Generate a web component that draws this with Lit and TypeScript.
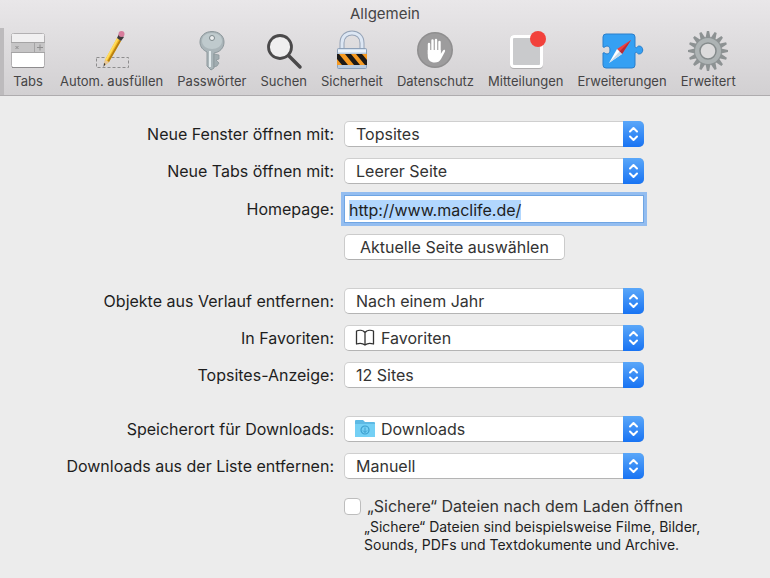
import { LitElement, html, css, svg, nothing, type TemplateResult } from "lit";
import { customElement, property } from "lit/decorators.js";

const toothAngles = Array.from({ length: 16 }, (_, i) => i * 22.5);

const icons: Record<string, TemplateResult> = {
  tabs: svg`
    <rect x="1.500" y="3.500" width="33" height="34" rx="2" fill="#fff" stroke="#b2b0b2"/>
    <rect x="2" y="4" width="32" height="9" fill="#f1f0f1"/>
    <rect x="1" y="12" width="34" height="11" fill="#c6c5c6"/>
    <path d="M1 12.500h34M1 22.500h34M24.500 12v11" stroke="#a5a4a5"/>
    <path d="M5.500 16l3 3M8.500 16l-3 3" stroke="#8f8e8f"/>
    <path d="M27 17.500h6M30 14.500v6" stroke="#8f8e8f"/>
    <path d="M2 37.500h32" stroke="#8e8c8e"/>`,
  pencil: svg`
    <rect x="2.500" y="27.500" width="32" height="10" fill="none" stroke="#8d8c8d" stroke-dasharray="3 2"/>
    <path d="M11 30L23 8l4 3L15 32l-5 4z" fill="#f5bd27"/>
    <path d="M11 30L23 8l1.500 1-12 22z" fill="#ffdd62"/>
    <path d="M15 32L27 11l-1.500-1-12 21z" fill="#b67e12"/>
    <path d="M11 30l4 2-5 4z" fill="#e8c79b"/>
    <path d="M10 33l1.500 1-2 3z" fill="#333"/>
    <path d="M23 8l2-4 5 3-3 4z" fill="#3d383c"/>
    <circle cx="27.500" cy="4" r="3" fill="#d77d9d"/>`,
  key: svg`
    <path d="M18 1.500C11 1.500 6 6 6 12c0 5 3 8 7 10v14l4 4 3-2V23c6-1 10-5 10-11C30 6 25 1.500 18 1.500z" fill="#aab5b9" stroke="#8d989c"/>
    <path d="M18 3C12 3 8 6 8 11s5 8 10 8 10-3 10-8-4-8-10-8z" fill="#bfcacd"/>
    <path d="M20 24l5 1v4l-3 1 3 3-2 3-3 1z" fill="#a1acb0" stroke="#8d989c" stroke-width=".8"/>
    <path d="M16 21v16" stroke="#e2eaec" stroke-width="2"/>
    <circle cx="18" cy="8" r="2.500" fill="#eceeef" stroke="#7d888c"/>`,
  search: svg`
    <circle cx="14" cy="17" r="11.500" fill="#efeeef" stroke="#4a494a" stroke-width="2.800"/>
    <path d="M23 26l11 11" stroke="#4a494a" stroke-width="3.500" stroke-linecap="round"/>`,
  lock: svg`
    <path d="M8 20V13c0-13.500 20-13.500 20 0v7" fill="none" stroke="#94a2b6" stroke-width="5"/>
    <path d="M8 20V13c0-13.500 20-13.500 20 0v7" fill="none" stroke="#dde7f4" stroke-width="3"/>
    <rect x="3.500" y="18.500" width="29" height="20" rx="1" fill="#b9cbe0" stroke="#8da0b8"/>
    <rect x="3" y="24" width="30" height="11" fill="#f59a23"/>
    <path d="M3 24h2l9 11H8l-5-6zM11 24h6l9 11h-6zM22 24h6l5 6v5h-2z" fill="#1d1a18"/>
    <path d="M4 21h28" stroke="#edf4fc" stroke-width="3"/>`,
  hand: svg`
    <circle cx="18" cy="20" r="18" fill="#8f8e8f"/>
    <circle cx="18" cy="20" r="16.500" fill="#9d9c9d"/>
    <path d="M12 14v10M15.500 10.500v12M19 10v12M22.500 12v11" stroke="#fff" stroke-width="2.400" stroke-linecap="round"/>
    <path d="M10.800 20h12.900v4l2.300-3.500c1-1.300 2.600-.5 2 1l-4 7.500c-1.300 2.500-3.400 3.500-6.200 3.500-4.500 0-7-2.500-7-6.500z" fill="#fff"/>`,
  badge: svg`
    <rect x="2" y="5" width="33" height="34" rx="4" fill="#b0afb0"/>
    <rect x="2" y="5" width="33" height="33" rx="4" fill="#fff"/>
    <rect x="5" y="8" width="27" height="27" rx="1" fill="#c9cacc"/>
    <circle cx="30" cy="9" r="8" fill="#f2413b"/>`,
  puzzle: svg`
    <path d="M4 4h26q3 0 3 3v10c2 2 2-1 4-1 5 0 5 8 0 8-2 0-2-3-4-1v12q0 3-3 3H4q-3 0-3-3V23c2-1 2 1 4 1 4 0 4-8 0-8-2 0-2 2-4 1V7q0-3 3-3z" fill="#35a0f3" stroke="#2a7ecb"/>
    <path d="M29 10L15 19l5 5z" fill="#f0403f"/>
    <path d="M7 33l8-14 5 5z" fill="#fff"/>
    <path d="M29 10L17.500 21.500 20 24z" fill="#b82b37"/>
    <path d="M7 33l10.500-11.500L20 24z" fill="#c6d8e7"/>`,
  gear: svg`
    ${toothAngles.map((a) => svg`<path d="M18.900 1h2.200l1.400 7h-5z" fill="#8d9293" transform="rotate(${a} 20 21)"/>`)}
    <circle cx="20" cy="21" r="14" fill="#8d9394"/>
    <circle cx="20" cy="21" r="10.500" fill="none" stroke="#adb3b4" stroke-width="5"/>
    <circle cx="20" cy="21" r="8" fill="#dcdbdc" stroke="#858b8c" stroke-width="1.500"/>`,
  book: svg`
    <path d="M10 3.500C8 1 4 1 1.500 2v13c3-1 6-1 8.500 1 2.500-2 5.500-2 8.500-1V2C16 1 12 1 10 3.500zV16" fill="none" stroke="#333" stroke-width="1.300" stroke-linejoin="round"/>`,
  folder: svg`
    <path d="M1 0h7l2 2h9q1 0 1 1v14H0V1q0-1 1-1z" fill="#5db9e4"/>
    <path d="M0 4h20v13H0z" fill="#74d0f5"/>
    <circle cx="10" cy="10" r="4" fill="none" stroke="#3c9fce" stroke-width="1.200"/>
    <path d="M10 7.500v5M8 10.500l2 2 2-2" fill="none" stroke="#3c9fce"/>`,
};

@customElement("pref-select")
class PrefSelect extends LitElement {
  @property() name = "";
  @property() label = "";
  @property() icon = "";
  @property({ type: Array }) options: string[] = [];

  static styles = css`
    :host { display: contents; }
    .label { text-align: right; }
    .box { position: relative; width: 100%; max-width: 300px; }
    .field {
      display: block; box-sizing: border-box; width: 100%; height: 26px;
      appearance: none; margin: 0; padding: 0 32px 0 11px;
      border: 1px solid #cfcfcf; border-bottom-color: #b4b4b4; border-radius: 5px;
      background: #fff; color: #333; font: inherit;
    }
    .with-icon { padding-left: 36px; }
    .glyph { position: absolute; left: 11px; top: 4px; width: 20px; height: 18px; }
    .knob {
      position: absolute; right: 0; top: 0; width: 21px; height: 26px;
      border-radius: 0 5px 5px 0; background: linear-gradient(#5aa7f9, #1873f3);
      pointer-events: none;
    }
  `;

  render() {
    return html`
      <label class="label" for=${this.name}>${this.label}</label>
      <div class="box">
        <select id=${this.name} class="field ${this.icon ? "with-icon" : ""}">
          ${this.options.map((o) => html`<option>${o}</option>`)}
        </select>
        ${this.icon
          ? html`<svg class="glyph" viewBox="0 0 20 18" aria-hidden="true">${icons[this.icon]}</svg>`
          : nothing}
        <svg class="knob" viewBox="0 0 21 26" aria-hidden="true">
          <path d="M7 10.500l3.500-3.500 3.500 3.500M7 15.500l3.500 3.500 3.500-3.500" fill="none" stroke="#fff"
            stroke-width="2" stroke-linecap="round" stroke-linejoin="round"/>
        </svg>
      </div>`;
  }
}

const tools: [string, string][] = [
  ["tabs", "Tabs"],
  ["pencil", "Autom. ausfüllen"],
  ["key", "Passwörter"],
  ["search", "Suchen"],
  ["lock", "Sicherheit"],
  ["hand", "Datenschutz"],
  ["badge", "Mitteilungen"],
  ["puzzle", "Erweiterungen"],
  ["gear", "Erweitert"],
];

@customElement("app-root")
class AppRoot extends LitElement {
  static styles = css`
    :host {
      display: block; min-height: 100vh; background: #ececec; color: #1e1e1e;
      font: 16px/20px Inter, "Liberation Sans", sans-serif;
    }
    .head {
      background: linear-gradient(#e9e7e9, #d2d0d2);
      border-bottom: 1px solid #aeacae;
    }
    .title {
      margin: 0; padding: 4px 0; text-align: center; color: #454445;
      font-size: 15px; font-weight: 400;
    }
    .tools { display: flex; align-items: stretch; gap: 14px; height: 67px; }
    .current { width: 4px; margin-right: -8px; background: #bdbbbd; }
    .tool {
      display: flex; flex-direction: column; align-items: center; gap: 1px; min-width: 36px;
      margin: 0; padding: 2px 0 0; border: 0; background: none; color: #454445;
      font: 13px/20px Inter, "Liberation Sans", sans-serif; white-space: nowrap;
    }
    .icon { display: block; width: 36px; height: 40px; overflow: visible; }
    .wide { width: 40px; }
    .form { display: flex; flex-direction: column; gap: 28px; padding: 25px 0 24px; }
    .group {
      display: grid; grid-template-columns: minmax(0, 334fr) minmax(0, 426fr);
      column-gap: 10px; row-gap: 11px; align-items: center;
    }
    .label { text-align: right; }
    .url {
      box-sizing: border-box; width: 100%; max-width: 300px; height: 28px; margin: 0;
      padding: 2px 4px 0; border: 1px solid #6fa5e3; border-radius: 0; outline: 0;
      box-shadow: 0 0 0 3px #93bdf0; background: #fff; color: #1e1e1e; font: inherit;
    }
    .url::selection { background: #b2d7fe; color: #1e1e1e; }
    .push {
      grid-column: 2; justify-self: start; height: 26px; margin: 0; padding: 0 15px;
      border: 1px solid #cbcbcb; border-bottom-color: #b0b0b0; border-radius: 5px;
      background: #fff; color: #333; font: inherit;
    }
    .safe { grid-column: 2; padding-top: 6px; }
    .check { display: flex; align-items: center; gap: 6px; color: #333; }
    .tick {
      appearance: none; box-sizing: border-box; width: 17px; height: 17px; margin: 0; flex: none;
      border: 1px solid #bdbdbd; border-radius: 4px; background: #fff;
    }
    .hint { margin: 2px 0 0 20px; max-width: 350px; font-size: 14px; line-height: 18px; }
  `;

  firstUpdated() {
    const url = this.renderRoot.querySelector<HTMLInputElement>("#homepage");
    url?.focus();
    url?.select();
  }

  render() {
    return html`
      <header class="head">
        <h1 class="title">Allgemein</h1>
        <nav class="tools">
          <span class="current"></span>
          ${tools.map(([icon, text]) => {
            const wide = icon === "gear" || icon === "puzzle";
            return html`
              <button class="tool" type="button">
                <svg class="icon ${wide ? "wide" : ""}" viewBox="0 0 ${wide ? 40 : 36} 40"
                  aria-hidden="true">${icons[icon]}</svg>
                ${text}
              </button>`;
          })}
        </nav>
      </header>
      <main class="form">
        <section class="group">
          <pref-select name="windows" label="Neue Fenster öffnen mit:" .options=${["Topsites"]}></pref-select>
          <pref-select name="newtabs" label="Neue Tabs öffnen mit:" .options=${["Leerer Seite"]}></pref-select>
          <label class="label" for="homepage">Homepage:</label>
          <input id="homepage" class="url" type="text" value="http://www.maclife.de/" />
          <button class="push" type="button">Aktuelle Seite auswählen</button>
        </section>
        <section class="group">
          <pref-select name="history" label="Objekte aus Verlauf entfernen:" .options=${["Nach einem Jahr"]}></pref-select>
          <pref-select name="favorites" label="In Favoriten:" icon="book" .options=${["Favoriten"]}></pref-select>
          <pref-select name="topsites" label="Topsites-Anzeige:" .options=${["12 Sites"]}></pref-select>
        </section>
        <section class="group">
          <pref-select name="folder" label="Speicherort für Downloads:" icon="folder" .options=${["Downloads"]}></pref-select>
          <pref-select name="cleanup" label="Downloads aus der Liste entfernen:" .options=${["Manuell"]}></pref-select>
          <div class="safe">
            <label class="check"><input class="tick" type="checkbox" />„Sichere“ Dateien nach dem Laden öffnen</label>
            <p class="hint">„Sichere“ Dateien sind beispielsweise Filme, Bilder, Sounds, PDFs und Textdokumente und Archive.</p>
          </div>
        </section>
      </main>`;
  }
}
